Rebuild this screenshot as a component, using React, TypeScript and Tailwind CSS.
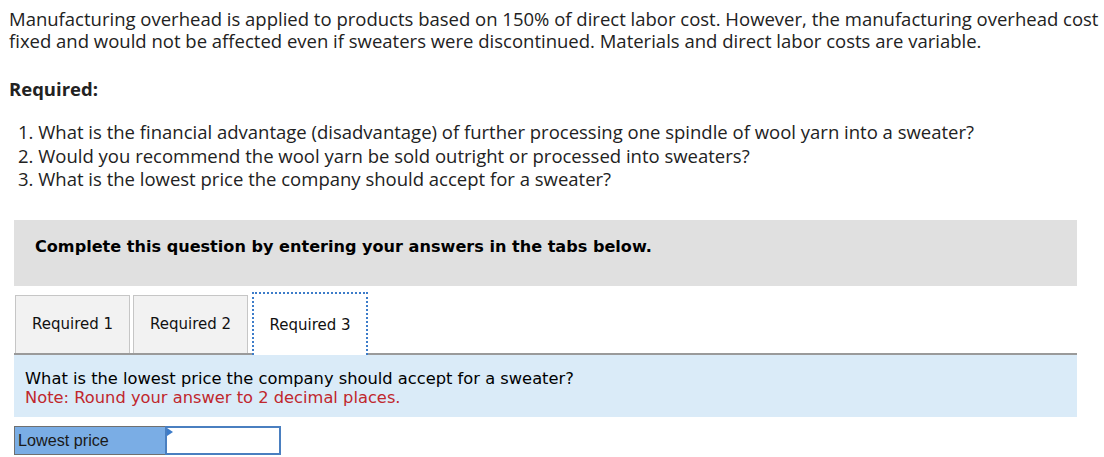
export default function App() {
  const questions = [
    'What is the financial advantage (disadvantage) of further processing one spindle of wool yarn into a sweater?',
    'Would you recommend the wool yarn be sold outright or processed into sweaters?',
    'What is the lowest price the company should accept for a sweater?',
  ];
  const tabs = ['Required 1', 'Required 2', 'Required 3'];

  return (
    <div className="w-[1104px] h-[457px] overflow-hidden bg-white text-[#222]">
      {/* Problem text */}
      <div className="pl-[9px] pt-[8px] whitespace-nowrap font-['Open_Sans',sans-serif] text-[18.5px] leading-[22px]">
        <p>
          Manufacturing overhead is applied to products based on 150% of direct labor cost. However, the manufacturing overhead cost is
          <br />
          fixed and would not be affected even if sweaters were discontinued. Materials and direct labor costs are variable.
        </p>
        <p className="mt-[26px] font-bold">Required:</p>
        <ol className="mt-[20px] pl-[9px] leading-[23.5px]">
          {questions.map((q, i) => (
            <li key={i}>
              {i + 1}. {q}
            </li>
          ))}
        </ol>
      </div>

      {/* Instructions box */}
      <div className="ml-[14px] mt-[29px] w-[1063px] h-[66px] bg-[#e0e0e0] flex items-center pl-[21px] pb-[10px] font-['DejaVu_Sans',sans-serif] text-[16.1px] font-bold text-black">
        Complete this question by entering your answers in the tabs below.
      </div>

      {/* Tabs */}
      <div className="ml-[14px] mt-[6px] w-[1063px] flex items-end gap-[3px] border-b-2 border-[#9a9a9a] font-['DejaVu_Sans',sans-serif] text-[15px]">
        {tabs.map((t, i) =>
          i === 2 ? (
            <div
              key={t}
              className="ml-[1px] w-[116px] h-[63px] -mb-[2px] bg-white border-2 border-dotted border-b-0 border-[#3d7cc9] flex items-center justify-center pt-[2px] text-[#111]"
            >
              {t}
            </div>
          ) : (
            <div
              key={t}
              className={`${i === 0 ? 'ml-[1px]' : ''} w-[115px] h-[58px] bg-[#f2f2f2] border border-b-0 border-[#c6c6c6] flex items-center justify-center text-[#111]`}
            >
              {t}
            </div>
          )
        )}
      </div>

      {/* Question panel */}
      <div className="ml-[14px] w-[1063px] h-[62px] bg-[#daebf8] pl-[11px] pt-[14px] font-['DejaVu_Sans',sans-serif] text-[16.3px] leading-[19px]">
        <p className="text-black">What is the lowest price the company should accept for a sweater?</p>
        <p className="text-[#c0272d]">Note: Round your answer to 2 decimal places.</p>
      </div>

      {/* Answer row */}
      <div className="ml-[14px] mt-[9px] flex h-[29px] font-['Liberation_Sans',Arial,sans-serif] text-[16.2px]">
        <div className="w-[151px] bg-[#7aade5] border border-[#707070] border-r-0 flex items-center pl-[3px] text-[#1a1a1a]">
          Lowest price
        </div>
        <div className="relative w-[116px] border-2 border-[#4a7fc0] bg-white">
          <span className="absolute left-0 top-0 w-0 h-0 border-t-[4px] border-b-[4px] border-l-[6px] border-t-transparent border-b-transparent border-l-[#3d7cc9]" />
        </div>
      </div>
    </div>
  );
}
